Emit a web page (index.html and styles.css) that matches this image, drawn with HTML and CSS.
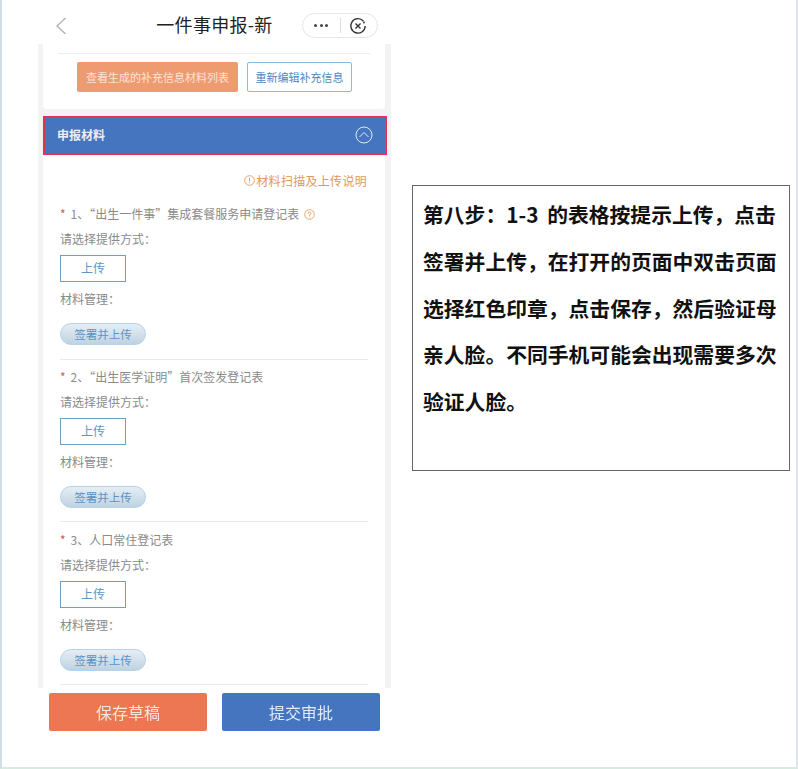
FILE: index.html
```html
<!DOCTYPE html>
<html lang="zh">
<head>
<meta charset="utf-8">
<title>一件事申报-新</title>
<link rel="stylesheet" href="styles.css">
</head>
<body>
<div class="page">
  <main class="phone">
    <header class="nav">
      <svg class="back" width="12" height="18" viewBox="0 0 12 18"><path d="M10.500 1 L2 9 L10.500 17" fill="none" stroke="#b4b4b4" stroke-width="1.400"/></svg>
      <h1 class="nav-title">一件事申报-新</h1>
      <div class="capsule">
        <span class="dots"><i></i><i></i><i></i></span>
        <span class="cap-sep"></span>
        <svg width="18" height="18" viewBox="0 0 18 18"><path d="M14.500 4.200 A7.200 7.200 0 1 0 16.200 9" fill="none" stroke="#333" stroke-width="1.400"/><circle cx="15" cy="5.500" r="0.900" fill="#333"/><path d="M6.500 6.500 L11.500 11.500 M11.500 6.500 L6.500 11.500" stroke="#333" stroke-width="1.400"/></svg>
      </div>
    </header>
    <div class="content">
      <section class="top-card">
        <div class="top-rule"></div>
        <div class="top-actions">
          <button class="btn-orange">查看生成的补充信息材料列表</button>
          <button class="btn-outline">重新编辑补充信息</button>
        </div>
      </section>
      <section class="panel">
        <div class="panel-head">
          <span class="panel-title">申报材料</span>
          <svg width="18" height="18" viewBox="0 0 18 18"><circle cx="9" cy="9" r="8" fill="none" stroke="#dfe8f5" stroke-width="1"/><path d="M4.500 11 L9 6.500 L13.500 11" fill="none" stroke="#dfe8f5" stroke-width="1"/></svg>
        </div>
        <div class="panel-body">
          <div class="help-row">
            <svg width="11" height="11" viewBox="0 0 11 11"><circle cx="5.500" cy="5.500" r="4.800" fill="none" stroke="#e3975c" stroke-width="0.900"/><path d="M5.500 2.800 V6.200 M5.500 7.300 V8.300" stroke="#e3975c" stroke-width="1"/></svg>
            <span>材料扫描及上传说明</span>
          </div>
          <div class="item first">
            <div class="item-title"><b>*</b> 1、“出生一件事”集成套餐服务申请登记表
              <svg class="q" width="11" height="11" viewBox="0 0 11 11"><circle cx="5.500" cy="5.500" r="4.800" fill="none" stroke="#e3a063" stroke-width="0.900"/><path d="M4 4.500 A1.500 1.500 0 1 1 5.500 6 V6.800 M5.500 7.600 V8.500" fill="none" stroke="#e3a063" stroke-width="0.900"/></svg>
            </div>
            <div class="label">请选择提供方式：</div>
            <div class="upload">上传</div>
            <div class="label second">材料管理：</div>
            <div class="sign">签署并上传</div>
          </div>
          <div class="item">
            <div class="item-title"><b>*</b> 2、“出生医学证明”首次签发登记表</div>
            <div class="label">请选择提供方式：</div>
            <div class="upload">上传</div>
            <div class="label second">材料管理：</div>
            <div class="sign">签署并上传</div>
          </div>
          <div class="item">
            <div class="item-title"><b>*</b> 3、人口常住登记表</div>
            <div class="label">请选择提供方式：</div>
            <div class="upload">上传</div>
            <div class="label second">材料管理：</div>
            <div class="sign">签署并上传</div>
          </div>
        </div>
      </section>
    </div>
    <footer class="footer">
      <button class="btn-save">保存草稿</button>
      <button class="btn-submit">提交审批</button>
    </footer>
  </main>
  <aside class="note">
    <p class="note-first">第八步：1-3 的表格按提示上传，点击</p>
    <p>签署并上传，在打开的页面中双击页面</p>
    <p>选择红色印章，点击保存，然后验证母</p>
    <p>亲人脸。不同手机可能会出现需要多次</p>
    <p>验证人脸。</p>
  </aside>
</div>
</body>
</html>
```
FILE: styles.css
```css
* { box-sizing: border-box; }
html, body { margin: 0; padding: 0; background: #fff; }
body {
  width: 798px;
  height: 769px;
  overflow: hidden;
  font-family: "Noto Sans CJK SC", "Noto Sans", sans-serif;
}
.page {
  width: 798px;
  height: 769px;
  display: flex;
  align-items: flex-start;
  padding-left: 36px;
  border-left: 2px solid #cfdde6;
  border-right: 2px solid #dfe3e8;
  border-bottom: 2px solid #d6ebdf;
}
.phone { width: 353px; flex: none; filter: blur(0.4px); }

/* nav */
.nav {
  height: 44px;
  position: relative;
  display: flex;
  align-items: center;
  justify-content: center;
  background: #fff;
}
.back { position: absolute; left: 17px; top: 17px; }
.nav-title {
  margin: 3px 0 0 0;
  font-size: 18px;
  font-weight: 400;
  color: #222;
  letter-spacing: 0.300px;
}
.capsule {
  position: absolute;
  left: 264px;
  top: 13px;
  width: 76px;
  height: 25px;
  border: 1px solid #e6e6e6;
  border-radius: 13px;
  display: flex;
  align-items: center;
  padding-left: 11px;
  background: #fff;
}
.dots { display: flex; gap: 2.500px; width: 15px; }
.dots i { width: 3px; height: 3px; border-radius: 50%; background: #444; }
.cap-sep { width: 1px; height: 15px; background: #ddd; margin: 0 8px 0 11px; }

/* content */
.content {
  height: 644px;
  overflow: hidden;
  background: #f3f3f3;
  padding: 0 6px 0 5px;
}
.top-card {
  height: 65px;
  background: #fff;
  border-radius: 0 0 4px 4px;
  padding: 9px 15px 0 15px;
}
.top-rule { height: 1px; background: #efefef; }
.top-actions {
  display: flex;
  gap: 9px;
  margin: 8px 0 0 19px;
}
button { font-family: inherit; padding: 0; }
.btn-orange {
  width: 161px;
  height: 30px;
  background: #ef9b71;
  border: 0;
  border-radius: 2px;
  color: #fbe3d6;
  font-size: 11px;
}
.btn-outline {
  width: 105px;
  height: 30px;
  background: #fff;
  border: 1px solid #8cb8de;
  border-radius: 2px;
  color: #4f86c0;
  font-size: 11px;
}
.panel { margin-top: 7px; background: #fff; }
.panel-head {
  height: 39px;
  margin: 0 -2px 0 0;
  background: #4675c0;
  border: 1px solid #e3304f;
  border-left-width: 2px;
  display: flex;
  align-items: center;
  justify-content: space-between;
  padding: 0 13px 2px 12px;
  color: #e9eef7;
  font-size: 12px;
  font-weight: 700;
}
.panel-body { padding: 0 17px 0 17px; height: 540px; }
.help-row {
  display: flex;
  justify-content: flex-end;
  align-items: center;
  gap: 1px;
  height: 16px;
  margin: 17px 1px 0 0;
  color: #e3975c;
  font-size: 12px;
  letter-spacing: 0.300px;
}
.item {
  height: 163px;
  border-bottom: 1px solid #e9e9e9;
  padding-top: 10px;
  color: #8a8a8a;
}
.item.first {
  height: 167.500px;
  padding-top: 14px;
  margin-top: 4px;
}
.item.first + .item { margin-top: -1px; }
.item-title {
  height: 16px;
  line-height: 16px;
  font-size: 12px;
  display: flex;
  align-items: center;
  gap: 3px;
  white-space: nowrap;
}
.item-title b { color: #d9534f; font-weight: 400; margin-right: 2px; }
.q { margin-left: 2px; }
.label {
  height: 16px;
  line-height: 16px;
  font-size: 12px;
  margin-top: 9px;
}
.upload {
  width: 66px;
  height: 27px;
  margin-top: 8px;
  border: 1px solid #6f9fbc;
  color: #5a97c6;
  font-size: 12px;
  line-height: 23px;
  text-align: center;
}
.label.second { margin-top: 9px; }
.sign {
  width: 86px;
  height: 22px;
  margin-top: 16px;
  border: 1px solid #b3d3ea;
  border-radius: 11px;
  background: linear-gradient(#e6eef4, #bfd2e2);
  color: #5c93c4;
  font-size: 11.500px;
  line-height: 20px;
  text-align: center;
}

/* footer */
.footer {
  display: flex;
  gap: 15px;
  padding: 5px 0 0 11px;
}
.btn-save, .btn-submit {
  width: 158px;
  height: 38px;
  border: 0;
  border-radius: 2px;
  font-size: 16px;
  color: #f6e6df;
}
.btn-save { background: #ee7753; }
.btn-submit { background: #4675c0; color: #e3eaf5; }

/* note */
.note {
  width: 378px;
  height: 286px;
  margin: 185px 0 0 21px;
  flex: none;
  border: 1px solid #666;
  padding: 5px 10px 0 10px;
}
.note p {
  margin: 0;
  height: 46.800px;
  line-height: 46.800px;
  font-size: 20.800px;
  font-weight: 700;
  color: #111;
  white-space: nowrap;
}
.note-first { word-spacing: 4px; }
```
